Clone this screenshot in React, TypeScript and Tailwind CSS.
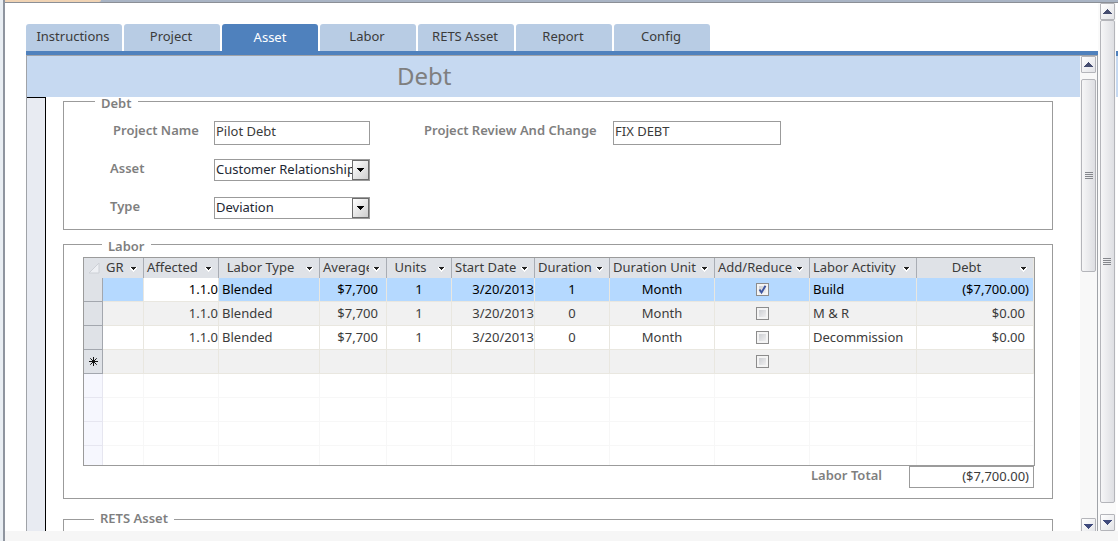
import React, { useState } from 'react';

interface LaborRow {
  affected: string;
  laborType: string;
  average: string;
  units: number;
  startDate: string;
  duration: number;
  durationUnit: string;
  add: boolean;
  activity: string;
  debt: string;
}

interface Column {
  title: string;
  width: string;
  centered?: boolean;
}

const TABS = ['Instructions', 'Project', 'Asset', 'Labor', 'RETS Asset', 'Report', 'Config'];

const COLUMNS: Column[] = [
  { title: 'GR', width: 'w-[41px]' },
  { title: 'Affected', width: 'w-[75px]' },
  { title: 'Labor Type', width: 'w-[101px]', centered: true },
  { title: 'Average', width: 'w-[67px]' },
  { title: 'Units', width: 'w-[65px]', centered: true },
  { title: 'Start Date', width: 'w-[83px]' },
  { title: 'Duration', width: 'w-[75px]' },
  { title: 'Duration Unit', width: 'w-[105px]' },
  { title: 'Add/Reduce', width: 'w-[95px]' },
  { title: 'Labor Activity', width: 'w-[107px]' },
  { title: 'Debt', width: 'w-auto', centered: true },
];

const ROWS: LaborRow[] = [
  { affected: '1.1.0', laborType: 'Blended', average: '$7,700', units: 1, startDate: '3/20/2013', duration: 1, durationUnit: 'Month', add: true, activity: 'Build', debt: '($7,700.00)' },
  { affected: '1.1.0', laborType: 'Blended', average: '$7,700', units: 1, startDate: '3/20/2013', duration: 0, durationUnit: 'Month', add: false, activity: 'M & R', debt: '$0.00' },
  { affected: '1.1.0', laborType: 'Blended', average: '$7,700', units: 1, startDate: '3/20/2013', duration: 0, durationUnit: 'Month', add: false, activity: 'Decommission', debt: '$0.00' },
];

const EMPTY_ROWS = ['h-6', 'h-6', 'h-6', 'h-[19px]'];

const Caret = () => (
  <svg width="7" height="4" viewBox="0 0 7 4" className="shrink-0" shapeRendering="crispEdges" aria-hidden="true">
    <path d="M0 0h7v1H6v1H5v1H4v1H3V3H2V2H1V1H0z" fill="#000" />
  </svg>
);

const HeaderCaret = () => (
  <svg width="9" height="6" viewBox="0 0 9 6" shapeRendering="crispEdges" aria-hidden="true">
    <path d="M1 1h7v2H7v1H6v1H5v1H4V5H3V4H2V3H1z" fill="#fff" />
    <path d="M2 1h5v1H6v1H5v1H4V3H3V2H2z" fill="#222" />
  </svg>
);

const ScrollButton: React.FC<{ direction: 'up' | 'down' }> = ({ direction }) => (
  <button
    type="button"
    aria-label={`Scroll ${direction}`}
    className="flex h-[17px] w-[15px] shrink-0 items-center justify-center rounded-[1px] border border-[#b4b5ba] bg-linear-to-br from-white to-[#e2e3e7]"
  >
    <svg width="9" height="5" viewBox="0 0 9 5" shapeRendering="crispEdges" aria-hidden="true">
      {direction === 'up' ? (
        <path d="M4 0h1v1h1v1h1v1h1v1h1v1H0V4h1V3h1V2h1V1h1z" fill="#454d70" />
      ) : (
        <path d="M0 0h9v1H8v1H7v1H6v1H5v1H4V4H3V3H2V2H1V1H0z" fill="#3f4a7c" />
      )}
    </svg>
  </button>
);

const ScrollThumb: React.FC<{ size: string }> = ({ size }) => (
  <div className={`${size} flex w-[15px] flex-col items-center justify-center gap-px rounded-[2px] border border-[#b4b5ba] bg-linear-to-r from-[#f6f6f7] to-[#dedfe3]`}>
    <i className="h-px w-2 bg-[#85878c]" />
    <i className="h-px w-2 bg-[#85878c]" />
    <i className="h-px w-2 bg-[#85878c]" />
    <i className="h-px w-2 bg-[#85878c]" />
  </div>
);

const Combo: React.FC<{ id: string; options: string[] }> = ({ id, options }) => (
  <div className="flex h-[22px] w-[156px] border border-[#9b9b9b]">
    <select id={id} className="min-w-0 flex-1 appearance-none overflow-hidden bg-white pb-0.5 pl-px leading-[18px] text-[#1d2733] text-clip">
      {options.map(option => <option key={option}>{option}</option>)}
    </select>
    <span className="pointer-events-none flex w-[17px] items-center justify-center border border-[#6c6c6c] bg-linear-to-br from-white to-[#cfcfcf]">
      <Caret />
    </span>
  </div>
);

const CheckCell: React.FC<{ label: string; initial: boolean }> = ({ label, initial }) => {
  const [checked, setChecked] = useState(initial);
  return (
    <span className="relative mx-auto block size-[13px]">
      <input
        type="checkbox"
        aria-label={label}
        checked={checked}
        onChange={e => setChecked(e.target.checked)}
        className="block size-[13px] appearance-none border border-[#8c8c8c] bg-linear-to-br from-[#c4c6cb] to-[#f8f8f8] shadow-[inset_0_0_0_2px_#f4f4f4]"
      />
      {checked && (
        <svg className="pointer-events-none absolute inset-0" width="13" height="13" viewBox="0 0 13 13" aria-hidden="true">
          <path d="M3.5 6.5 5.5 9.5 9.5 2.8" fill="none" stroke="#3d55a0" strokeWidth="1.9" />
        </svg>
      )}
    </span>
  );
};

const LaborTable = () => {
  const grid = 'border-r border-b border-[#e9e7e0]';
  const text = 'pt-0 pb-0.5';
  const selector = 'border-r border-b border-[#a3a7ae] bg-[#dfe2e7]';

  return (
    <div className="border border-[#9b9b9b]">
      <table className="w-full table-fixed border-separate border-spacing-0">
        <thead>
          <tr className="h-5 bg-[#dfe2e7]">
            <th className="w-[19px] p-0">
              <svg width="12" height="12" viewBox="0 0 12 12" className="ml-1" aria-label="Select all">
                <path d="M11 1v10H1z" fill="#eef0f4" stroke="#cdd0d6" />
              </svg>
            </th>
            {COLUMNS.map(col => (
              <th key={col.title} className={`${col.width} border-r border-[#a9adb4] p-0 font-normal last:border-[#e9e7e0]`}>
                <div className="flex h-5 items-center">
                  <span className={`min-w-0 flex-1 overflow-hidden pb-0.5 whitespace-nowrap ${col.centered ? 'text-center' : 'pl-[3px] text-left'}`}>
                    {col.title}
                  </span>
                  <button type="button" aria-label={`Filter ${col.title}`} className="flex w-[17px] shrink-0 pt-0.5 pl-[3px]">
                    <HeaderCaret />
                  </button>
                </div>
              </th>
            ))}
          </tr>
        </thead>
        <tbody>
          {ROWS.map((row, i) => (
            <tr key={i} className={`h-6 ${i === 0 ? 'bg-[#b5d9ff] text-black' : i === 1 ? 'bg-[#f1f1f1]' : 'bg-white'}`}>
              <th className={`${selector} p-0`} />
              <td className={`${grid} p-0`} />
              <td className={`${grid} ${text} px-0 text-right ${i === 0 ? 'bg-white' : ''}`}>{row.affected}</td>
              <td className={`${grid} ${text} pr-0 pl-[3px]`}>{row.laborType}</td>
              <td className={`${grid} ${text} pr-2 pl-0 text-right`}>{row.average}</td>
              <td className={`${grid} ${text} px-0 text-center`}>{row.units}</td>
              <td className={`${grid} ${text} px-0 text-right`}>{row.startDate}</td>
              <td className={`${grid} ${text} px-0 text-center`}>{row.duration}</td>
              <td className={`${grid} ${text} px-0 text-center`}>{row.durationUnit}</td>
              <td className={`${grid} p-0`}><CheckCell label={`Add or reduce, row ${i + 1}`} initial={row.add} /></td>
              <td className={`${grid} ${text} pr-0 pl-[3px]`}>{row.activity}</td>
              <td className={`${grid} ${text} pl-0 text-right ${row.debt.startsWith('(') ? 'pr-1' : 'pr-2'}`}>{row.debt}</td>
            </tr>
          ))}
          {/* New record row */}
          <tr className="h-6 bg-[#f1f1f1]">
            <th className={`${selector} p-0`}>
              <svg width="9" height="9" viewBox="0 0 9 9" className="mx-auto" aria-label="New record">
                <path d="M4.5 0v9M0 4.5h9M1.3 1.3l6.4 6.4M7.7 1.3 1.3 7.7" stroke="#111" />
              </svg>
            </th>
            {COLUMNS.map((col, i) => (
              <td key={col.title} className={`${grid} p-0`}>
                {i === 8 && <CheckCell label="Add or reduce, new record" initial={false} />}
              </td>
            ))}
          </tr>
          {EMPTY_ROWS.map((height, i) => (
            <tr key={i} className={`${height} group`}>
              <th className="border-r border-b border-[#e6e6f0] bg-[#f6f7fe] p-0 group-last:border-b-0" />
              {COLUMNS.map(col => (
                <td key={col.title} className="border-r border-b border-[#f7f7f7] p-0 group-last:border-b-0" />
              ))}
            </tr>
          ))}
        </tbody>
      </table>
    </div>
  );
};

const Group: React.FC<{ title: string; className: string; legend: string; children?: React.ReactNode }> = ({ title, className, legend, children }) => (
  <fieldset className={`min-w-0 border border-[#9b9b9b] ${className}`}>
    <legend className={`h-[9px] px-1.5 font-semibold text-[#7f7f7f] ${legend}`}>{title}</legend>
    {children}
  </fieldset>
);

export default function App() {
  const [activeTab, setActiveTab] = useState('Asset');
  const label = 'font-semibold text-[#7f7f7f]';
  const textBox = 'h-6 border border-[#9b9b9b] px-px pb-1';

  return (
    <div className="flex h-screen overflow-hidden bg-white font-['Noto_Sans','Open_Sans',sans-serif] text-[13px] leading-[18px] text-[#3b3b3b]">
      <div className="w-[5px] shrink-0 border-r-2 border-[#8f959f] bg-[#e9eef3]" />
      <div className="flex min-w-0 flex-1 flex-col">
        <div className="flex h-[3px] shrink-0 border-b border-[#8b8f96] bg-[#a9b4c4]">
          <div className="w-24 rounded-br-sm bg-[#f0d3b4]" />
        </div>

        <div className="flex min-h-0 flex-1">
          <div className="flex min-w-0 flex-1 flex-col pt-[21px]">
            <nav className="flex shrink-0 gap-0.5 pl-[21px]" role="tablist">
              {TABS.map(tab => (
                <button
                  key={tab}
                  type="button"
                  role="tab"
                  aria-selected={tab === activeTab}
                  onClick={() => setActiveTab(tab)}
                  className={`h-[27px] w-24 rounded-t-[3px] ${tab === activeTab ? 'bg-[#4f81bd] pb-0.5 text-white' : 'bg-[#b8cce4] pr-0.5 pb-1'}`}
                >
                  {tab}
                </button>
              ))}
            </nav>

            <div className="ml-[21px] flex min-h-0 flex-1 flex-col border-t-4 border-[#4f81bd]">
              <div className="flex min-h-0 flex-1 border-x border-t border-[#a0a3a8]">
                <main className="flex min-w-0 flex-1 flex-col overflow-hidden">
                  <h1 className="h-[41px] shrink-0 bg-[#c6d9f1] pl-[370px] text-[24px] leading-10 text-[#7f7f7f]">Debt</h1>
                  <div className="flex min-h-0 flex-1">
                    <div className="w-[19px] shrink-0 border-t border-r border-black bg-[#e8ebf2]" />
                    <form className="min-w-0 flex-1 pr-[27px] pl-[17px]">
                      <Group title="Debt" className="pb-2.5" legend="ml-[31px] pt-1 leading-[5px]">
                        <div className="flex flex-col pt-[15px] pl-[46px]">
                          <div className="flex items-start">
                            <label htmlFor="project-name" className={`${label} w-[104px] pl-[3px]`}>Project Name</label>
                            <input id="project-name" defaultValue="Pilot Debt" className={`${textBox} w-[156px]`} />
                            <label htmlFor="review" className={`${label} ml-[54px] w-[189px]`}>Project Review And Change</label>
                            <input id="review" defaultValue="FIX DEBT" className={`${textBox} w-[168px]`} />
                          </div>
                          <div className="mt-3.5 flex items-start">
                            <label htmlFor="asset" className={`${label} w-[104px]`}>Asset</label>
                            <Combo id="asset" options={['Customer Relationship', 'Billing']} />
                          </div>
                          <div className="mt-4 flex items-start">
                            <label htmlFor="type" className={`${label} w-[104px]`}>Type</label>
                            <Combo id="type" options={['Deviation', 'Standard']} />
                          </div>
                        </div>
                      </Group>

                      <Group title="Labor" className="mt-2.5 pb-2.5" legend="ml-[38px] pt-1 leading-[5px]">
                        <div className="pt-2 pr-[17px] pl-[19px]">
                          <LaborTable />
                          <div className="flex justify-end pr-px">
                            <label htmlFor="labor-total" className={`${label} w-[98px]`}>Labor Total</label>
                            <input id="labor-total" readOnly value="($7,700.00)" className="h-[22px] w-[125px] border border-[#9b9b9b] px-1 pb-0.5 text-right" />
                          </div>
                        </div>
                      </Group>

                      <Group title="RETS Asset" className="mt-4 h-40" legend="ml-[30px] leading-[7px]" />
                    </form>
                  </div>
                </main>

                <div className="flex w-[17px] shrink-0 flex-col items-center bg-[#f8f8f8]">
                  <ScrollButton direction="up" />
                  <div className="flex min-h-0 flex-1 flex-col pt-1.5">
                    <ScrollThumb size="h-[44%]" />
                  </div>
                  <div className="-mb-1"><ScrollButton direction="down" /></div>
                </div>
              </div>
            </div>
          </div>

          <div className="flex w-[18px] shrink-0 flex-col items-center bg-[#fafafa]">
            <ScrollButton direction="up" />
            <ScrollThumb size="mb-[11px] flex-1" />
            <ScrollButton direction="down" />
          </div>
          <div className="w-0.5 shrink-0 pt-12">
            <div className="h-[5px] bg-[#4f81bd]" />
            <div className="h-[41px] bg-[#c6d9f1]" />
          </div>
        </div>

        <footer className="h-2.5 shrink-0 bg-[#f6f6f6]" />
      </div>
    </div>
  );
}
